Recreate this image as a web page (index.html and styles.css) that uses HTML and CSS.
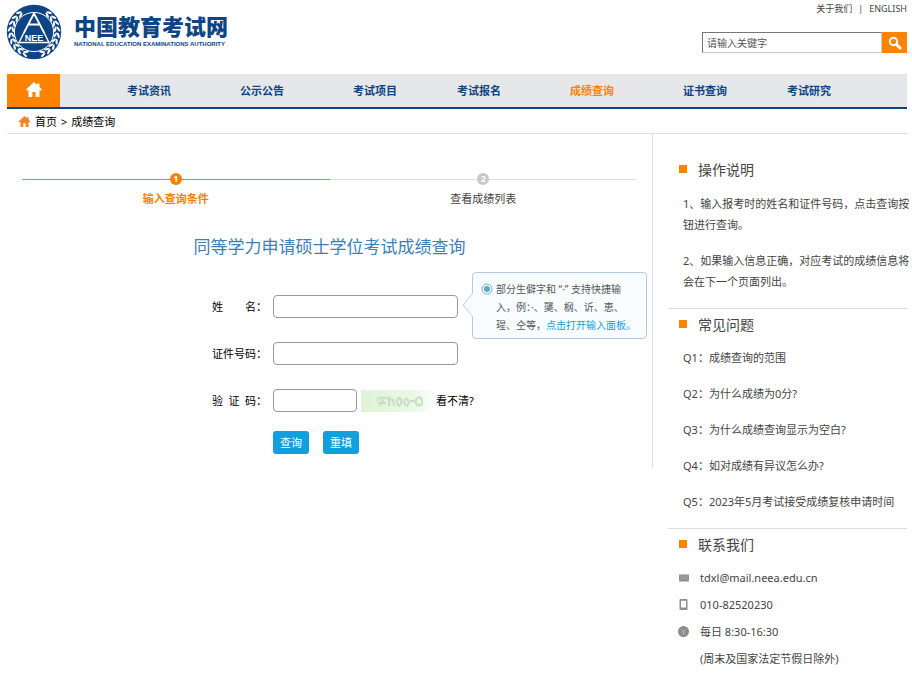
FILE: index.html
```html
<!DOCTYPE html>
<html lang="zh-CN">
<head>
<meta charset="utf-8">
<meta name="viewport" content="width=device-width, initial-scale=1">
<title>同等学力申请硕士学位考试成绩查询</title>
<link rel="stylesheet" href="styles.css">
</head>
<body>
<header class="header">
  <a class="logo" href="#">
    <svg class="emblem" viewBox="0 0 56 56" aria-hidden="true">
      <defs>
        <g id="leaf" fill="#fff">
          <ellipse cx="28" cy="3.4" rx="2.9" ry="1.1" transform="rotate(-24 28 3.4)"/>
          <ellipse cx="28" cy="6.6" rx="2.9" ry="1.1" transform="rotate(24 28 6.6)"/>
        </g>
        <g id="branch">
          <use href="#leaf" transform="rotate(38 28 28)"/>
          <use href="#leaf" transform="rotate(53 28 28)"/>
          <use href="#leaf" transform="rotate(68 28 28)"/>
          <use href="#leaf" transform="rotate(83 28 28)"/>
          <use href="#leaf" transform="rotate(98 28 28)"/>
          <use href="#leaf" transform="rotate(113 28 28)"/>
          <use href="#leaf" transform="rotate(128 28 28)"/>
          <use href="#leaf" transform="rotate(143 28 28)"/>
          <use href="#leaf" transform="rotate(158 28 28)"/>
        </g>
      </defs>
      <circle cx="28" cy="28" r="27.2" fill="#0d4484"/>
      <use href="#branch"/>
      <use href="#branch" transform="matrix(-1 0 0 1 56 0)"/>
      <circle cx="28" cy="28" r="19.6" fill="#0d4484" stroke="#fff" stroke-width="1"/>
      <path d="M28 9.500 17.500 29.500M28 9.500 38.500 29.500M23 20.500H33" fill="none" stroke="#fff" stroke-width="1.800"/>
      <path d="M17.500 29.500 13 38.500H43L38.500 29.500" fill="none" stroke="#fff" stroke-width="1.400"/>
      <text x="28" y="37" text-anchor="middle" class="emblem-text">NEE</text>
    </svg>
    <span class="brand">
      <span class="brand-cn">中国教育考试网</span>
      <span class="brand-en">NATIONAL EDUCATION EXAMINATIONS AUTHORITY</span>
    </span>
  </a>
  <div class="tools">
    <div class="top-links"><a href="#">关于我们</a><span>|</span><a href="#">ENGLISH</a></div>
    <form class="search">
      <input type="text" aria-label="搜索" placeholder="请输入关键字">
      <button type="button" aria-label="搜索">
        <svg viewBox="0 0 14 14" aria-hidden="true"><circle cx="5.500" cy="5.500" r="3.700" fill="none" stroke="#fff" stroke-width="2"/><path d="M8.500 8.500 12 12" stroke="#fff" stroke-width="3" stroke-linecap="round"/></svg>
      </button>
    </form>
  </div>
</header>

<nav class="nav">
  <a class="nav-home" href="#" aria-label="首页">
    <svg viewBox="0 0 16 15" aria-hidden="true"><path d="M8 0 0 7.600 1.200 8.800 2.500 7.700V15H6.400V10H9.600V15H13.500V7.700L14.800 8.800 16 7.600 13.500 5.200V1.500H11.300V3.100Z" fill="#fff"/></svg>
  </a>
  <ul>
    <li><a href="#">考试资讯</a></li>
    <li><a href="#">公示公告</a></li>
    <li><a href="#">考试项目</a></li>
    <li><a href="#">考试报名</a></li>
    <li><a class="active" href="#">成绩查询</a></li>
    <li><a href="#">证书查询</a></li>
    <li><a href="#">考试研究</a></li>
  </ul>
</nav>

<div class="crumbs">
  <svg viewBox="0 0 16 15" aria-hidden="true"><path d="M8 0 0 7.600 1.200 8.800 2.500 7.700V15H6.400V10H9.600V15H13.500V7.700L14.800 8.800 16 7.600 13.500 5.200V1.500H11.300V3.100Z" fill="#f58220"/></svg>
  <a href="#">首页</a><span>&gt;</span><a href="#">成绩查询</a>
</div>

<div class="layout">
  <main class="main">
    <ol class="steps">
      <li class="current"><span class="dot">1</span><span>输入查询条件</span></li>
      <li><span class="dot">2</span><span>查看成绩列表</span></li>
    </ol>
    <h1>同等学力申请硕士学位考试成绩查询</h1>
    <form class="query">
      <div class="row">
        <label for="name"><span>姓 名</span>：</label>
        <input id="name" type="text">
        <div class="tip">
          <svg class="tip-arrow" viewBox="0 0 11 24" aria-hidden="true"><path d="M11 0 1 12 11 24" fill="#f9fdff" stroke="#bccfe2"/></svg>
          <svg class="tip-icon" viewBox="0 0 12 12" aria-hidden="true"><circle cx="6" cy="6" r="5" fill="#fff" stroke="#6db5d0"/><circle cx="6" cy="6" r="3" fill="#55a9c8"/></svg>
          <p>部分生僻字和 “·” 支持快捷输<br>入，例：·、龑、㭎、䜣、恵、<br>瑆、仝等，<a href="#">点击打开输入面板。</a></p>
        </div>
      </div>
      <div class="row">
        <label for="idno"><span>证件号码</span>：</label>
        <input id="idno" type="text">
      </div>
      <div class="row">
        <label for="code"><span>验 证 码</span>：</label>
        <input id="code" class="short" type="text">
        <svg class="captcha" viewBox="0 0 71 22" role="img" aria-label="验证码">
          <defs><linearGradient id="fade"><stop offset="0" stop-color="#def4d6"/><stop offset=".7" stop-color="#e9f8e4"/><stop offset="1" stop-color="#fbfefa"/></linearGradient></defs>
          <path d="M0 0H71V22H0Z" fill="url(#fade)"/>
          <path d="M16 9Q22 6 27 9M17 13H25M22 10 19 16M28 6V16M28 10Q33 8 33 16M38 7Q34 12 38 16Q43 12 38 7M45 8Q41 13 46 16Q50 12 45 8M49 11H55M58 7Q52 11 56 15Q62 17 61 11Q61 8 58 7" fill="none" stroke="#cbdcc5" stroke-width="2"/>
          <path d="M15 11 24 9M30 7 36 12 34 15M40 8 45 13M53 9 59 14" fill="none" stroke="#d3e3cd"/>
        </svg>
        <a class="refresh" href="#">看不清?</a>
      </div>
      <div class="actions"><button type="button">查询</button><button type="reset">重填</button></div>
    </form>
  </main>

  <aside class="side">
    <section>
      <h2>操作说明</h2>
      <div class="notes">
        <p>1、输入报考时的姓名和证件号码，点击查询按钮进行查询。</p>
        <p>2、如果输入信息正确，对应考试的成绩信息将会在下一个页面列出。</p>
      </div>
    </section>
    <section>
      <h2>常见问题</h2>
      <ul class="faq">
        <li><a href="#">Q1：成绩查询的范围</a></li>
        <li><a href="#">Q2：为什么成绩为0分?</a></li>
        <li><a href="#">Q3：为什么成绩查询显示为空白?</a></li>
        <li><a href="#">Q4：如对成绩有异议怎么办?</a></li>
        <li><a href="#">Q5：2023年5月考试接受成绩复核申请时间</a></li>
      </ul>
    </section>
    <section>
      <h2>联系我们</h2>
      <ul class="contact">
        <li><svg viewBox="0 0 12 12" aria-hidden="true"><path d="M1 2.500H11V9.500H1Z" fill="#909090"/><path d="M1 3 6 6.500 11 3M1 9 4.500 6M11 9 7.500 6" fill="none" stroke="#b4b4b4" stroke-width=".6"/></svg>tdxl@mail.neea.edu.cn</li>
        <li><svg viewBox="0 0 12 12" aria-hidden="true"><rect x="1.500" y="0" width="8" height="11" rx="1" fill="#909090"/><path d="M3 1.800H8V8.500H3Z" fill="#fff"/></svg>010-82520230</li>
        <li><svg viewBox="0 0 12 12" aria-hidden="true"><circle cx="5.500" cy="5.500" r="5.500" fill="#8c8c8c"/><path d="M3.500 3.500 5.500 6 8 3.500M5.500 6V8.500" fill="none" stroke="#bbb"/></svg>每日 8:30-16:30</li>
        <li class="plain">(周末及国家法定节假日除外)</li>
      </ul>
    </section>
  </aside>
</div>
</body>
</html>
```
FILE: styles.css
```css
* { box-sizing: border-box; }
body, h1, h2, p, ul, ol { margin: 0; padding: 0; }
ul, ol { list-style: none; }
a { color: inherit; text-decoration: none; }
svg { display: block; flex: none; }
input, button { font-family: inherit; }

body {
  padding: 0 5px 0 7px;
  background: #fff;
  color: #444;
  font: 11px/21px "Noto Sans", "Noto Sans CJK SC", sans-serif;
}

.header { display: flex; justify-content: space-between; height: 74px; }
.logo { display: flex; align-items: flex-start; gap: 12px; padding-top: 4px; color: #0d4484; }
.emblem { width: 56px; height: 56px; margin-left: -1px; }
.emblem-text { font: bold 9px "Liberation Sans", sans-serif; fill: #fff; }
.brand { display: flex; flex-direction: column; padding-top: 9px; }
.brand-cn { font-size: 22px; line-height: 27px; font-weight: 900; }
.brand-en { font: bold 6px/9px "Liberation Sans", sans-serif; }

.tools { display: flex; flex-direction: column; align-items: flex-end; gap: 14px; }
.top-links { display: flex; gap: 6px; font-size: 9px; line-height: 18px; }
.search { display: flex; width: 205px; height: 21px; }
.search input {
  flex: 1;
  min-width: 0;
  padding: 0 4px;
  border: 1px solid #ccc;
  border-top-color: #777;
  border-left-color: #777;
  font-size: 10px;
}
.search input::placeholder { color: #555; }
.search button { display: grid; place-items: center; width: 25px; padding: 0; border: 0; background: #ff8200; }
.search svg { width: 14px; height: 14px; }

.nav { display: flex; height: 35px; border-bottom: 2px solid #0d4484; background: #e6e7eb; }
.nav-home { display: grid; place-items: center; width: 53px; padding-bottom: 3px; background: #ff8200; }
.nav-home svg { width: 16px; height: 15px; }
.nav ul { display: flex; padding-left: 67px; line-height: 34px; font-weight: bold; color: #0d4484; }
.nav li { margin-right: 69px; white-space: nowrap; }
.nav li:nth-child(3n) { margin-right: 60px; }
.nav .active { color: #ff8200; }

.crumbs { display: flex; align-items: center; gap: 4px; height: 25px; padding-left: 11px; border-bottom: 1px solid #ddd; color: #000; }
.crumbs svg { width: 13px; height: 11px; }

.layout { display: flex; align-items: flex-start; gap: 15px; }
.main { flex: 1; min-height: 333px; padding: 39px 15px 0; border-right: 1px solid #ddd; }

.steps { display: flex; }
.steps li { flex: 1; display: flex; flex-direction: column; align-items: center; padding-top: 6px; }
.steps li::before { content: ""; width: 100%; height: 1px; background: #ddd; }
.steps .current { color: #f58200; font-weight: bold; }
.steps .current::before { background: #f58200; }
.dot { width: 12px; height: 12px; margin: -7px 0 3px; border-radius: 50%; background: #c8c8c8; color: #fff; font-size: 9px; line-height: 12px; font-weight: bold; text-align: center; }
.current .dot { background: #f58200; }

h1 { margin-top: 24px; color: #3c7fb9; font-size: 17px; line-height: 28px; font-weight: normal; text-align: center; }

.query { padding: 34px 0 0 190px; color: #000; }
.row { position: relative; display: flex; align-items: center; height: 23px; margin-bottom: 24px; }
.row label { display: flex; width: 61px; }
.row label span { width: 44px; text-align-last: justify; }
.row input { width: 185px; height: 23px; padding: 0 5px; border: 1px solid #999; border-radius: 4px; }
.row .short { width: 84px; }
.captcha { width: 71px; height: 22px; margin: 0 4px; }
.actions { display: flex; gap: 14px; padding: 0 0 13px 61px; margin-top: -5px; }
.actions button { width: 36px; height: 23px; padding: 0; border: 0; border-radius: 3px; background: #129fdd; color: #fff; font-size: 11px; line-height: 21px; }

.tip {
  position: absolute;
  left: 260px;
  top: -23px;
  display: flex;
  gap: 3px;
  width: 175px;
  padding: 7px 4px 4px 8px;
  border: 1px solid #b5c9e0;
  border-radius: 4px;
  background: #f9fdff;
  color: #555;
  font-size: 10px;
  line-height: 18px;
}
.tip p { white-space: nowrap; }
.tip-arrow { position: absolute; left: -11px; top: 20px; width: 11px; height: 24px; }
.tip-icon { width: 12px; height: 12px; margin-top: 3px; }
.tip a { color: #129fdd; }

.side { width: 239px; padding-top: 20px; }
.side section + section { border-top: 1px solid #ddd; }
.side h2 { display: flex; align-items: center; gap: 11px; height: 30px; margin-bottom: 1px; padding-left: 11px; font-size: 14px; font-weight: normal; }
.side h2::before { content: ""; width: 8px; height: 8px; background: #ff8200; }
.notes { padding: 8px 0 1px 15px; margin-right: -4px; }
.notes p { margin-bottom: 15px; }
.faq { padding: 0 0 8px 15px; line-height: 36px; }
.contact { padding: 4px 0 0 10px; line-height: 27px; }
.contact li { display: flex; align-items: center; gap: 10px; }
.contact svg { width: 12px; height: 12px; }
.contact .plain { padding-left: 22px; }
```
